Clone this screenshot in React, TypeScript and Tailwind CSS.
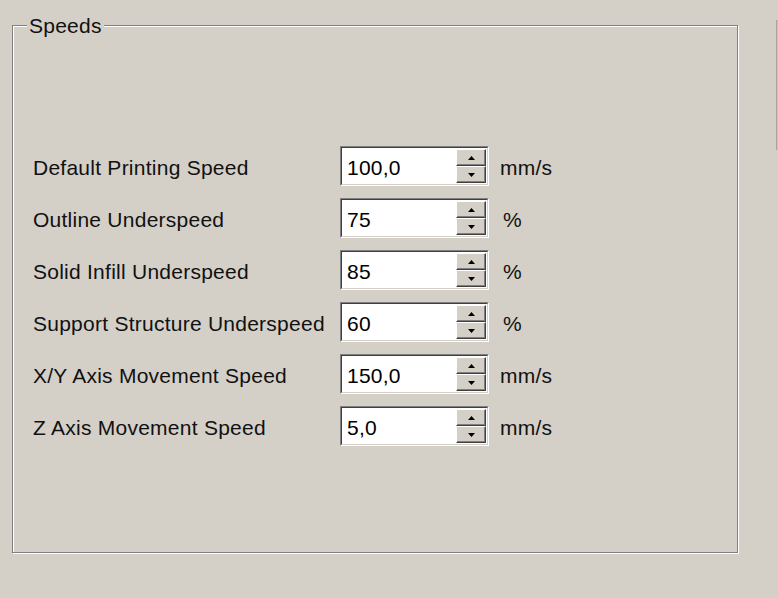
const rows = [
  { label: 'Default Printing Speed', value: '100,0', unit: 'mm/s' },
  { label: 'Outline Underspeed', value: '75', unit: '%' },
  { label: 'Solid Infill Underspeed', value: '85', unit: '%' },
  { label: 'Support Structure Underspeed', value: '60', unit: '%' },
  { label: 'X/Y Axis Movement Speed', value: '150,0', unit: 'mm/s' },
  { label: 'Z Axis Movement Speed', value: '5,0', unit: 'mm/s' },
]

function SpinButton({ up }: { up?: boolean }) {
  return (
    <div className="flex-1 flex items-center justify-center bg-[#d4d0c8] border border-t-white border-l-white border-r-[#404040] border-b-[#404040] shadow-[inset_-1px_-1px_0_#808080]">
      <svg width="7" height="4" viewBox="0 0 7 4">
        {up ? <path d="M3.5 0 L7 4 L0 4 Z" fill="#000" /> : <path d="M0 0 L7 0 L3.5 4 Z" fill="#000" />}
      </svg>
    </div>
  )
}

function SpinBox({ value }: { value: string }) {
  return (
    <div className="w-[149px] h-[40px] flex border border-t-[#808080] border-l-[#808080] border-r-white border-b-white">
      <div className="flex-1 flex border border-t-[#404040] border-l-[#404040] border-r-[#d4d0c8] border-b-[#d4d0c8] bg-white">
        <div className="flex-1 flex items-center pl-[5px] pt-[3px] text-black">{value}</div>
        <div className="w-[31px] flex flex-col py-px pr-px">
          <SpinButton up />
          <SpinButton />
        </div>
      </div>
    </div>
  )
}

export default function App() {
  return (
    <div
      className="relative w-[778px] h-[598px] bg-[#d4d0c8] pt-[25px] pl-[12px] text-[21px] tracking-[0.25px] text-[#111] overflow-hidden"
      style={{ fontFamily: '"Liberation Sans", Arial, sans-serif' }}
    >
      <div className="relative w-[726px] h-[528px] border border-[#808080] shadow-[inset_1px_1px_0_#fff,1px_1px_0_#fff] pl-[20px] pt-[120px]">
        <div className="absolute left-[14px] top-[-13px] px-[2px] bg-[#d4d0c8] leading-[26px]">Speeds</div>
        <div className="flex flex-col gap-[12px]">
          {rows.map((r) => (
            <div key={r.label} className="flex items-center h-[40px]">
              <div className="w-[307px] pt-[3px]">{r.label}</div>
              <SpinBox value={r.value} />
              <div className={r.unit === '%' ? 'ml-[14px] pt-[3px]' : 'ml-[11px] pt-[3px]'}>{r.unit}</div>
            </div>
          ))}
        </div>
      </div>
      <div className="absolute left-[776px] top-[20px] w-[2px] h-[130px] border-l border-[#a8a49c] bg-[#c8c4bc]" />
    </div>
  )
}
